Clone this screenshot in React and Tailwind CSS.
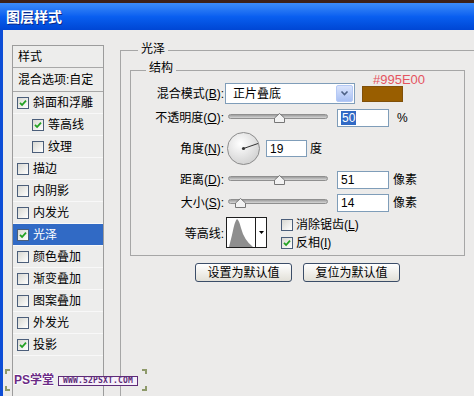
import React from 'react';

const FONT = { fontFamily: '"Liberation Sans", "Noto Sans CJK SC", sans-serif' };

function Check({ checked }) {
  return (
    <span className="w-[12px] h-[12px] border border-[#4b5e7a] bg-gradient-to-br from-[#d8d8d2] to-white flex items-center justify-center shrink-0">
      {checked && (
        <svg width="8" height="8" viewBox="0 0 8 8">
          <path d="M1 3.8 L3.1 6 L7 1.6" fill="none" stroke="#21a121" strokeWidth="1.8" />
        </svg>
      )}
    </span>
  );
}

const items = [
  { t: '斜面和浮雕', c: true, i: false, s: false },
  { t: '等高线', c: true, i: true, s: false },
  { t: '纹理', c: false, i: true, s: false },
  { t: '描边', c: false, i: false, s: false },
  { t: '内阴影', c: false, i: false, s: false },
  { t: '内发光', c: false, i: false, s: false },
  { t: '光泽', c: true, i: false, s: true },
  { t: '颜色叠加', c: false, i: false, s: false },
  { t: '渐变叠加', c: false, i: false, s: false },
  { t: '图案叠加', c: false, i: false, s: false },
  { t: '外发光', c: false, i: false, s: false },
  { t: '投影', c: true, i: false, s: false },
];

function Slider({ pos }) {
  return (
    <div className="relative ml-[4px] w-[100px] h-[18px] shrink-0">
      <div className="absolute left-0 right-0 top-[5px] h-[5px] rounded-full border border-[#8f8f8f] bg-gradient-to-b from-[#9e9e9e] to-[#d6d6d6]" />
      <svg className="absolute top-[4px]" style={{ left: pos - 5 }} width="11" height="10" viewBox="0 0 11 10">
        <path d="M5.5 0.5 L10.5 5 V9.5 H0.5 V5 Z" fill="#f2f2f2" stroke="#767676" />
      </svg>
    </div>
  );
}

function Input({ w, h, children }) {
  return (
    <div className={`${w} ${h} border border-[#7f9db9] bg-white flex items-center pl-[3px] leading-[14px] shrink-0`}>
      {children}
    </div>
  );
}

export default function App() {
  return (
    <div className="w-[474px] h-[396px] overflow-hidden relative bg-[#ecebea] text-[12px] text-black" style={FONT}>
      {/* Title bar */}
      <div className="h-[30px] border-t-[3px] border-[#3d2116] bg-gradient-to-b from-[#3d8cf7] via-[#0a5ff0] to-[#0046d4] flex items-center pl-[6px]">
        <span className="text-white font-bold text-[14px] leading-[16px]" style={{ textShadow: '1px 1px 0 #0a2a8a' }}>图层样式</span>
      </div>

      <div className="flex h-[366px] border-l-[3px] border-[#0d4dd6]">
        {/* Left list */}
        <div className="ml-[9px] mt-[15px] w-[92px] h-[380px] border border-[#9c9c9c] bg-[#ededec] shrink-0">
          <div className="h-[22px] border-b border-[#a8a8a8] pl-[5px] flex items-center leading-[14px]">样式</div>
          <div className="h-[24px] border-b border-[#a8a8a8] pl-[5px] flex items-center leading-[14px]">混合选项:自定</div>
          {items.map((it) => (
            <div
              key={it.t}
              className={`h-[22px] border-b border-[#f8f8f8] flex items-center gap-[4px] leading-[14px] ${it.i ? 'pl-[19px]' : 'pl-[4px]'} ${it.s ? 'bg-[#316ac5] text-white' : ''}`}
            >
              <Check checked={it.c} />
              <span>{it.t}</span>
            </div>
          ))}
        </div>

        {/* Outer group 光泽 */}
        <div className="relative ml-[16px] mt-[20px] w-[380px] h-[400px] border-l border-t border-[#a6a6a6] shrink-0">
          <span className="absolute left-[17px] top-[-10px] px-[3px] bg-[#ecebea] leading-[16px]">光泽</span>

          {/* Inner group 结构 */}
          <div className="relative ml-[9px] mt-[19px] w-[335px] h-[186px] border border-[#a6a6a6]">
            <span className="absolute left-[15px] top-[-11px] px-[3px] bg-[#ecebea] leading-[16px]">结构</span>

            {/* Row 1 */}
            <div className="flex items-center h-[21px] mt-[12px]">
              <div className="w-[93px] text-right leading-[14px] shrink-0">混合模式(<u>B</u>):</div>
              <div className="ml-[1px] w-[130px] h-[21px] border border-[#7f9db9] bg-white flex items-center shrink-0">
                <span className="ml-[7px] leading-[14px]">正片叠底</span>
                <span className="ml-auto mr-[1px] w-[17px] h-[17px] rounded-[2px] bg-gradient-to-b from-[#dbe5fc] to-[#a9c0f3] border border-[#b5c9f5] flex items-center justify-center">
                  <svg width="9" height="7" viewBox="0 0 9 7">
                    <path d="M1.5 1.5 L4.5 4.5 L7.5 1.5" fill="none" stroke="#4d6185" strokeWidth="1.6" />
                  </svg>
                </span>
              </div>
              <div className="relative ml-[7px] w-[41px] h-[16px] bg-[#995e00] border border-[#80500a] shrink-0">
                <span className="absolute left-[10px] top-[-14px] text-[13px] leading-[13px] text-[#e4545f] whitespace-nowrap">#995E00</span>
              </div>
            </div>

            {/* Row 2 */}
            <div className="flex items-center h-[18px] mt-[5px]">
              <div className="w-[93px] text-right leading-[14px] shrink-0">不透明度(<u>O</u>):</div>
              <Slider pos={51} />
              <div className="ml-[9px]">
                <Input w="w-[52px]" h="h-[18px]">
                  <span className="bg-[#316ac5] text-white px-[1px]">50</span>
                </Input>
              </div>
              <span className="ml-[8px] leading-[14px]">%</span>
            </div>

            {/* Row 3 */}
            <div className="flex items-center h-[33px] mt-[5px]">
              <div className="w-[93px] text-right leading-[14px] shrink-0">角度(<u>N</u>):</div>
              <div className="ml-[3px] w-[33px] h-[33px] shrink-0">
                <svg width="33" height="33" viewBox="0 0 33 33">
                  <defs>
                    <radialGradient id="dialg" cx="40%" cy="35%" r="70%">
                      <stop offset="0%" stopColor="#ffffff" />
                      <stop offset="100%" stopColor="#d0d0d0" />
                    </radialGradient>
                  </defs>
                  <circle cx="16.5" cy="16.5" r="16" fill="url(#dialg)" stroke="#8c8c8c" />
                  <line x1="16.5" y1="16.5" x2="31" y2="11.5" stroke="#333" strokeWidth="1" />
                  <circle cx="16.5" cy="16.5" r="1.6" fill="#333" />
                </svg>
              </div>
              <div className="ml-[6px]">
                <Input w="w-[41px]" h="h-[17px]">19</Input>
              </div>
              <span className="ml-[3px] leading-[14px]">度</span>
            </div>

            {/* Row 4 */}
            <div className="flex items-center h-[18px] mt-[6px]">
              <div className="w-[93px] text-right leading-[14px] shrink-0">距离(<u>D</u>):</div>
              <Slider pos={51} />
              <div className="ml-[9px]">
                <Input w="w-[52px]" h="h-[18px]">51</Input>
              </div>
              <span className="ml-[4px] leading-[14px]">像素</span>
            </div>

            {/* Row 5 */}
            <div className="flex items-center h-[18px] mt-[5px]">
              <div className="w-[93px] text-right leading-[14px] shrink-0">大小(<u>S</u>):</div>
              <Slider pos={12} />
              <div className="ml-[9px]">
                <Input w="w-[52px]" h="h-[18px]">14</Input>
              </div>
              <span className="ml-[4px] leading-[14px]">像素</span>
            </div>

            {/* Row 6 */}
            <div className="flex items-start h-[31px] mt-[5px]">
              <div className="w-[93px] text-right leading-[14px] mt-[10px] shrink-0">等高线:</div>
              <div className="ml-[2px] w-[41px] h-[31px] border border-[#1e1e1e] bg-white flex shrink-0">
                <svg width="28" height="29" viewBox="0 0 28 29">
                  <path d="M2 29 L5 17 Q8 2 10 1 Q12 2 14 10 Q17 22 26 29 Z" fill="#8e8e8e" />
                </svg>
                <div className="ml-auto w-[11px] h-full border-l border-[#1e1e1e] flex items-center justify-center">
                  <svg width="5" height="3" viewBox="0 0 5 3">
                    <path d="M0 0 H5 L2.5 3 Z" fill="#000" />
                  </svg>
                </div>
              </div>
              <div className="ml-[14px] pt-[1px] flex flex-col gap-[4px]">
                <div className="h-[14px] flex items-center gap-[3px] leading-[14px]">
                  <Check checked={false} />
                  <span>消除锯齿(<u>L</u>)</span>
                </div>
                <div className="h-[14px] flex items-center gap-[3px] leading-[14px]">
                  <Check checked={true} />
                  <span>反相(<u>I</u>)</span>
                </div>
              </div>
            </div>
          </div>

          {/* Buttons */}
          <div className="ml-[9px] mt-[7px] w-[335px] flex justify-center gap-[11px]">
            <button className="w-[97px] h-[19px] rounded-[3px] border border-[#3b4d68] bg-gradient-to-b from-white to-[#e2e0d8] leading-[14px] text-[12px]">设置为默认值</button>
            <button className="w-[97px] h-[19px] rounded-[3px] border border-[#3b4d68] bg-gradient-to-b from-white to-[#e2e0d8] leading-[14px] text-[12px]">复位为默认值</button>
          </div>
        </div>
      </div>

      {/* Watermark overlay */}
      <div className="absolute left-[5px] top-[369px] w-[142px] h-[22px]">
        <span className="absolute left-0 top-0 w-[5px] h-[5px] border-l-2 border-t-2 border-[#8e9a6a]" />
        <span className="absolute left-0 bottom-0 w-[5px] h-[5px] border-l-2 border-b-2 border-[#8e9a6a]" />
        <span className="absolute right-0 top-0 w-[5px] h-[5px] border-r-2 border-t-2 border-[#8e9a6a]" />
        <span className="absolute right-0 bottom-0 w-[5px] h-[5px] border-r-2 border-b-2 border-[#8e9a6a]" />
        <span
          className="absolute left-[9px] top-[4px] text-[12px] leading-[14px] font-bold text-[#6b2b86]"
          style={{ textShadow: '1px 0 0 #fff, -1px 0 0 #fff, 0 1px 0 #fff, 0 -1px 0 #fff' }}
        >
          PS学堂
        </span>
        <span
          className="absolute left-[53px] top-[7px] w-[80px] h-[10px] border border-[#5e2b78] bg-[#f6f0fa] text-[8px] leading-[8px] font-bold text-[#5e2b78] whitespace-nowrap flex items-center justify-center tracking-[0.2px]"
          style={{ fontFamily: '"DejaVu Sans Mono", monospace' }}
        >
          WWW.52PSXT.COM
        </span>
      </div>
    </div>
  );
}
